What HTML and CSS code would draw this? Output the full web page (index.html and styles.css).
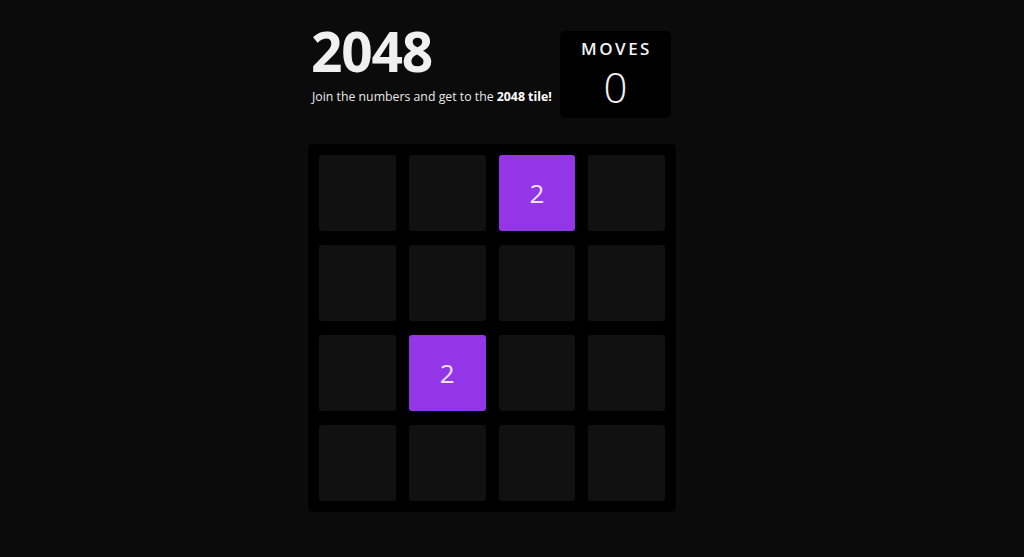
FILE: index.html
```html
<!DOCTYPE html>
<html lang="en">
<head>
    <meta charset="UTF-8">
    <title>2048</title>
    <meta name="viewport" content="width=device-width, initial-scale=1.0">
    <link rel="stylesheet" href="styles.css">
</head>
<body>
    <div class="page">
        <div class="game">
            <!-- 标题和步数 -->
            <div class="header">
                <div class="intro">
                    <h1 class="title">2048</h1>
                    <p class="subtitle">Join the numbers and get to the <b>2048 tile!</b></p>
                </div>
                <div class="moves-box">
                    <div class="moves-label">MOVES</div>
                    <div class="moves-value">0</div>
                </div>
            </div>
            <!-- 棋盘 -->
            <div class="board">
                <div class="cell"></div>
                <div class="cell"></div>
                <div class="cell tile">2</div>
                <div class="cell"></div>
                <div class="cell"></div>
                <div class="cell"></div>
                <div class="cell"></div>
                <div class="cell"></div>
                <div class="cell"></div>
                <div class="cell tile">2</div>
                <div class="cell"></div>
                <div class="cell"></div>
                <div class="cell"></div>
                <div class="cell"></div>
                <div class="cell"></div>
                <div class="cell"></div>
            </div>
        </div>
    </div>
</body>
</html>
```

FILE: styles.css
```css
html,body {
    margin: 0;
    padding: 0;
    background: #0b0b0b;
    color: #f2f2f2;
    font-family: 'Open Sans', 'Noto Sans', Arial, sans-serif;
    min-height: 100vh;
}
.page {
    display: flex;
    justify-content: center;
    padding-right: 40px;
}
.game {
    width: 368px;
    padding-top: 23px;
}
.header {
    display: flex;
    justify-content: space-between;
    align-items: flex-start;
    padding-right: 5px;
    margin-bottom: 26px;
}
.title {
    margin: 0 0 0 3px;
    font-size: 55px;
    line-height: 56px;
    font-weight: 700;
    letter-spacing: -1.2px;
    color: #f0f0f0;
}
.subtitle {
    margin: 9px 0 0 4px;
    font-size: 12.3px;
    line-height: 18px;
    white-space: nowrap;
    color: #e8e8e8;
}
.subtitle b { color: #fff; }
.moves-box {
    flex-shrink: 0;
    margin-top: 8px;
    width: 111px;
    height: 87px;
    background: #000;
    border-radius: 5px;
    display: flex;
    flex-direction: column;
    align-items: center;
}
.moves-label {
    margin-top: 6px;
    font-size: 17px;
    font-weight: 600;
    letter-spacing: 2.5px;
    padding-left: 2px;
}
.moves-value {
    margin-top: 4px;
    font-size: 42px;
    line-height: 46px;
    font-weight: 300;
}
.board {
    background: #000;
    border-radius: 5px;
    padding: 11px;
    display: grid;
    grid-template-columns: repeat(4, 1fr);
    grid-auto-rows: 76px;
    gap: 14px 13px;
}
.cell {
    background: #111;
    border-radius: 3px;
}
.tile {
    background: #9336e8;
    color: #efe3ff;
    display: flex;
    align-items: center;
    justify-content: center;
    font-size: 26px;
    font-weight: 400;
}
```
